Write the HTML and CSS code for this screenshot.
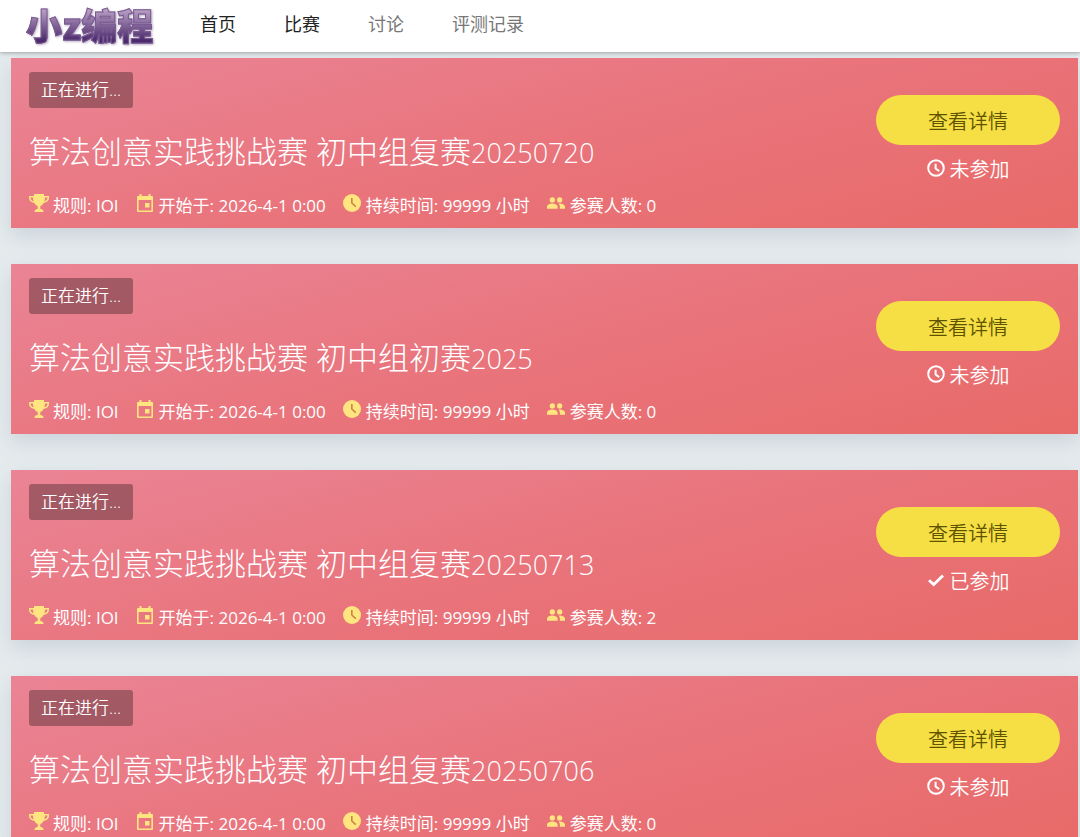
FILE: index.html
```html
<!DOCTYPE html>
<html lang="zh-CN">
<head>
    <meta charset="UTF-8">
    <meta name="viewport" content="width=device-width, initial-scale=1.0">
    <title>比赛 - 小z编程</title>
    <link rel="stylesheet" href="styles.css">
</head>
<body>
    <svg class="sprite" aria-hidden="true">
        <symbol id="icon-trophy" viewBox="0 0 20 18">
            <path d="M5 0h10v2h5v1.500c0 3.200-2 5-5.400 5.400-.8 1.600-1.900 2.600-3.300 3v3c1.800.2 3.200 1 3.200 2.500v.6h-9v-.6c0-1.500 1.400-2.300 3.200-2.500v-3c-1.400-.4-2.500-1.400-3.300-3C2 8.500 0 6.700 0 3.500V2h5zM1.500 3.400c0 2 1.100 3.300 3.100 3.800C4.200 6 4 4.800 4 3.400zm17 0H16c0 1.400-.2 2.600-.6 3.800 2-.5 3.100-1.800 3.100-3.800z"/>
        </symbol>
        <symbol id="icon-calendar" viewBox="0 0 18 18">
            <path d="M3.500 0h2v2h7V0h2v2H16a1 1 0 0 1 1 1v14a1 1 0 0 1-1 1H2a1 1 0 0 1-1-1V3a1 1 0 0 1 1-1h1.500zM2.600 6v10.400h12.800V6zM9 9h4.500v4.500H9z"/>
        </symbol>
        <symbol id="icon-clock" viewBox="2 2 20 20">
            <path d="M12 2a10 10 0 1 0 0 20 10 10 0 0 0 0-20z"/>
            <path d="M11.800 6.500V12l4.400 4" fill="none" stroke="#c9873f" stroke-width="1.800"/>
        </symbol>
        <symbol id="icon-people" viewBox="1 5 22 14">
            <path d="M16.500 11.500a3.200 3.200 0 1 0 0-6.400 3.200 3.200 0 0 0 0 6.400zm-9 0a3.200 3.200 0 1 0 0-6.400 3.200 3.200 0 0 0 0 6.400zm0 1.200c-2.330 0-6.500 1.400-6.500 3.800V19h13v-2.500c0-2.400-4.170-3.800-6.500-3.800zm9 0c-.5 0-1 .05-1.500.2 1.100.9 1.700 2.100 1.700 3.600V19H23v-2.500c0-2.400-4.170-3.800-6.500-3.800z"/>
        </symbol>
        <symbol id="icon-clock-outline" viewBox="0 0 18 18">
            <path d="M9 1.200a7.800 7.800 0 1 0 0 15.600A7.800 7.800 0 0 0 9 1.200zM8.600 4.800v4.700l3.600 2.600" fill="none" stroke="currentColor" stroke-width="2"/>
        </symbol>
        <symbol id="icon-check" viewBox="0 0 18 18">
            <path d="M2 9.200l4.700 4.400L16 4.400" fill="none" stroke="currentColor" stroke-width="2.800"/>
        </symbol>
    </svg>

    <header class="nav">
        <a class="logo" href="#">小z编程</a>
        <nav class="nav-list">
            <a class="active" href="#">首页</a>
            <a class="active" href="#">比赛</a>
            <a href="#">讨论</a>
            <a href="#">评测记录</a>
        </nav>
    </header>

    <main class="contests" id="contests"></main>

    <script>
        const contests = [
            { name: '算法创意实践挑战赛 初中组复赛', date: '20250720', people: 0, joined: false },
            { name: '算法创意实践挑战赛 初中组初赛', date: '2025', people: 0, joined: false },
            { name: '算法创意实践挑战赛 初中组复赛', date: '20250713', people: 2, joined: true },
            { name: '算法创意实践挑战赛 初中组复赛', date: '20250706', people: 0, joined: false }
        ];

        function icon(name) {
            return `<svg class="icon icon-${name}" aria-hidden="true"><use href="#icon-${name}"/></svg>`;
        }

        document.getElementById('contests').innerHTML = contests.map(c => `
            <section class="contest">
                <div class="info">
                    <span class="badge">正在进行...</span>
                    <h1><a href="#">${c.name}<span class="date">${c.date}</span></a></h1>
                    <ul class="meta">
                        <li>${icon('trophy')}规则: IOI</li>
                        <li>${icon('calendar')}开始于: 2026-4-1 0:00</li>
                        <li>${icon('clock')}持续时间: 99999 小时</li>
                        <li>${icon('people')}参赛人数: ${c.people}</li>
                    </ul>
                </div>
                <div class="side">
                    <button type="button">查看详情</button>
                    <p class="status">${c.joined ? icon('check') + '已参加' : icon('clock-outline') + '未参加'}</p>
                </div>
            </section>`).join('');
    </script>
</body>
</html>
```
FILE: styles.css
```css
* {
    box-sizing: border-box;
}
body {
    margin: 0;
    font-family: 'Open Sans', 'Noto Sans CJK SC', sans-serif;
    font-weight: 350;
    background: #e5ebed;
    color: #fff;
    overflow-x: hidden;
}
a {
    color: inherit;
    text-decoration: none;
}
.sprite {
    display: none;
}
.nav {
    position: relative;
    display: flex;
    align-items: flex-start;
    height: 52px;
    padding-left: 26px;
    background: #fff;
    box-shadow: 0 1px 4px rgba(0, 0, 0, 0.3);
}
.logo {
    width: 174px;
    font-family: 'Noto Sans CJK SC', sans-serif;
    font-size: 36px;
    line-height: 48px;
    font-weight: 900;
    white-space: nowrap;
    color: transparent;
    background: linear-gradient(to bottom, #b9a0c4 20%, #4b2a6c 85%);
    background-clip: text;
    -webkit-background-clip: text;
    -webkit-text-stroke: 1px #7a5a92;
    filter: drop-shadow(1px 1px 1px rgba(90, 60, 110, 0.4));
}
.nav-list {
    display: flex;
    gap: 48px;
    font-size: 18px;
    line-height: 48px;
    font-weight: 400;
    color: #777;
}
.nav-list .active {
    color: #222;
}
.contests {
    display: flex;
    flex-direction: column;
    gap: 36px;
    padding: 6px 2px 0 11px;
}
.contest {
    display: flex;
    justify-content: space-between;
    height: 170px;
    padding: 14px 18px 0;
    background: linear-gradient(165deg, #ea8495 0%, #e9747c 50%, #e86a68 100%);
    box-shadow: 0 8px 20px rgba(100, 120, 150, 0.2);
}
.badge {
    display: inline-block;
    padding: 0 12px;
    font-size: 17px;
    line-height: 36px;
    border-radius: 3px;
    background: rgba(0, 0, 0, 0.3);
}
.info h1 {
    margin: 20px 0 0;
    font-size: 31px;
    line-height: 46px;
    font-weight: 300;
}
.date {
    font-size: 27px;
}
.meta {
    display: flex;
    gap: 17px;
    margin: 16px 0 0;
    padding: 0;
    list-style: none;
    font-size: 17px;
    line-height: 28px;
    font-weight: 400;
}
.icon {
    width: 18px;
    height: 18px;
    margin-right: 5px;
    fill: currentColor;
}
.meta .icon {
    color: #ffe57f;
}
.meta .icon-trophy {
    width: 20px;
    margin-right: 4px;
}
.side {
    width: 184px;
    padding-top: 23px;
    text-align: center;
}
.side button {
    width: 100%;
    height: 50px;
    border: none;
    border-radius: 25px;
    background: #f6df45;
    color: #5f5300;
    font: inherit;
    font-size: 20px;
    cursor: pointer;
}
.status {
    margin: 10px 0 0;
    font-size: 20px;
    line-height: 30px;
}
```
